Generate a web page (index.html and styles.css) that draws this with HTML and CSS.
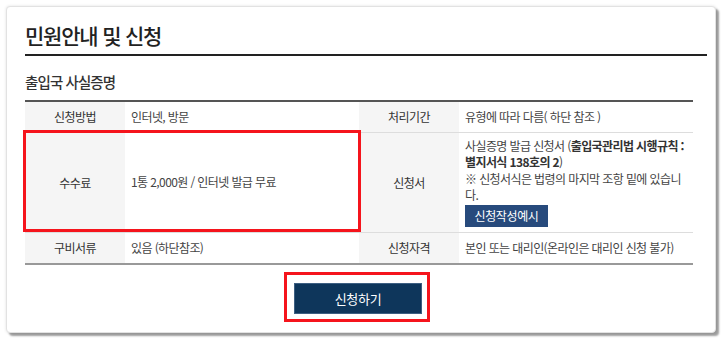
FILE: index.html
```html
<!DOCTYPE html>
<html lang="ko">
<head>
    <meta charset="UTF-8">
    <meta name="viewport" content="width=device-width, initial-scale=1.0">
    <link rel="stylesheet" href="styles.css">
</head>
<body>
    <div class="panel">
        <h1 class="page-title">민원안내 및 신청</h1>
        <h2 class="section-title">출입국 사실증명</h2>

        <div class="info-wrap">
            <table class="info">
                <colgroup>
                    <col class="c-th">
                    <col class="c-td">
                    <col class="c-th2">
                    <col>
                </colgroup>
                <tr class="row-1">
                    <th>신청방법</th>
                    <td>인터넷, 방문</td>
                    <th>처리기간</th>
                    <td>유형에 따라 다름( 하단 참조 )</td>
                </tr>
                <tr class="row-2">
                    <th>수수료</th>
                    <td>1통 2,000원 / 인터넷 발급 무료</td>
                    <th>신청서</th>
                    <td class="form-cell">
                        <span class="line">사실증명 발급 신청서 (<b>출입국관리법 시행규칙 :</b></span>
                        <span class="line"><b>별지서식 138호의 2</b>)</span>
                        <span class="line">※ 신청서식은 법령의 마지막 조항 밑에 있습니</span>
                        <span class="line">다.</span>
                        <span class="btn-sample">신청작성예시</span>
                    </td>
                </tr>
                <tr class="row-3">
                    <th>구비서류</th>
                    <td>있음 (하단참조)</td>
                    <th>신청자격</th>
                    <td>본인 또는 대리인(온라인은 대리인 신청 불가)</td>
                </tr>
            </table>
            <div class="mark mark-fee"></div>
        </div>

        <div class="actions">
            <span class="mark-btn">
                <button class="btn-apply">신청하기</button>
            </span>
        </div>
    </div>
</body>
</html>
```

FILE: styles.css
```css
* {
    margin: 0;
    padding: 0;
    box-sizing: border-box;
}

body {
    font-family: "Noto Sans CJK KR", "Noto Sans", sans-serif;
    background: #fff;
    color: #333;
    width: 728px;
    height: 344px;
    overflow: hidden;
}

.panel {
    margin: 6px 0 0 6px;
    width: 710px;
    height: 327px;
    border: 1px solid #e2e2e2;
    border-radius: 4px;
    background: #fff;
    padding: 0 8px 0 18px;
    box-shadow: 3px 3px 2px rgba(0, 0, 0, 0.38), 0 0 3px rgba(0, 0, 0, 0.12);
}

.page-title {
    font-size: 21px;
    font-weight: 500;
    color: #222;
    line-height: 30px;
    padding-top: 13px;
    padding-bottom: 4px;
    border-bottom: 2px solid #222;
    letter-spacing: -1.2px;
}

.section-title {
    font-size: 14.5px;
    font-weight: 500;
    color: #333;
    line-height: 20px;
    margin-top: 16px;
    margin-bottom: 8px;
    letter-spacing: -0.9px;
}

.info-wrap {
    position: relative;
    width: 668px;
}

.info {
    width: 668px;
    border-collapse: collapse;
    table-layout: fixed;
    border-top: 2px solid #555;
    border-bottom: 2px solid #999;
    font-size: 12px;
    letter-spacing: -0.6px;
}

.c-th { width: 100px; }
.c-td { width: 234px; }
.c-th2 { width: 100px; }

.info th {
    background: #f5f5f5;
    font-weight: 400;
    color: #333;
    text-align: center;
    vertical-align: middle;
}

.info td {
    color: #444;
    padding-left: 6px;
    vertical-align: middle;
    line-height: 16.5px;
    white-space: nowrap;
}

.info tr + tr th,
.info tr + tr td {
    border-top: 1px solid #ddd;
}

.row-1 th, .row-1 td { height: 31px; }
.row-2 th, .row-2 td { height: 100px; }
.row-3 th, .row-3 td { height: 32px; }

.form-cell .line {
    display: block;
}

.form-cell b {
    font-weight: 700;
    color: #333;
}

.btn-sample {
    display: inline-block;
    margin-top: 1px;
    width: 83px;
    height: 22px;
    line-height: 22px;
    background: #274a7c;
    color: #fff;
    text-align: center;
    font-size: 12px;
    letter-spacing: -0.4px;
}

.mark {
    position: absolute;
    border: 3px solid #f5141c;
}

.mark-fee {
    left: -2px;
    top: 30px;
    width: 338px;
    height: 102px;
}

.actions {
    width: 668px;
    display: flex;
    justify-content: center;
    margin-top: 7px;
}

.mark-btn {
    display: inline-block;
    border: 3px solid #f5141c;
    padding: 8px 5px 5px 7px;
    margin-left: -4px;
}

.btn-apply {
    display: block;
    width: 128px;
    height: 31px;
    border: 1px solid #3d5f82;
    background: #0e365b;
    color: #fff;
    font-family: "Noto Sans CJK KR", "Noto Sans", sans-serif;
    font-size: 13px;
    letter-spacing: -0.3px;
}
```
